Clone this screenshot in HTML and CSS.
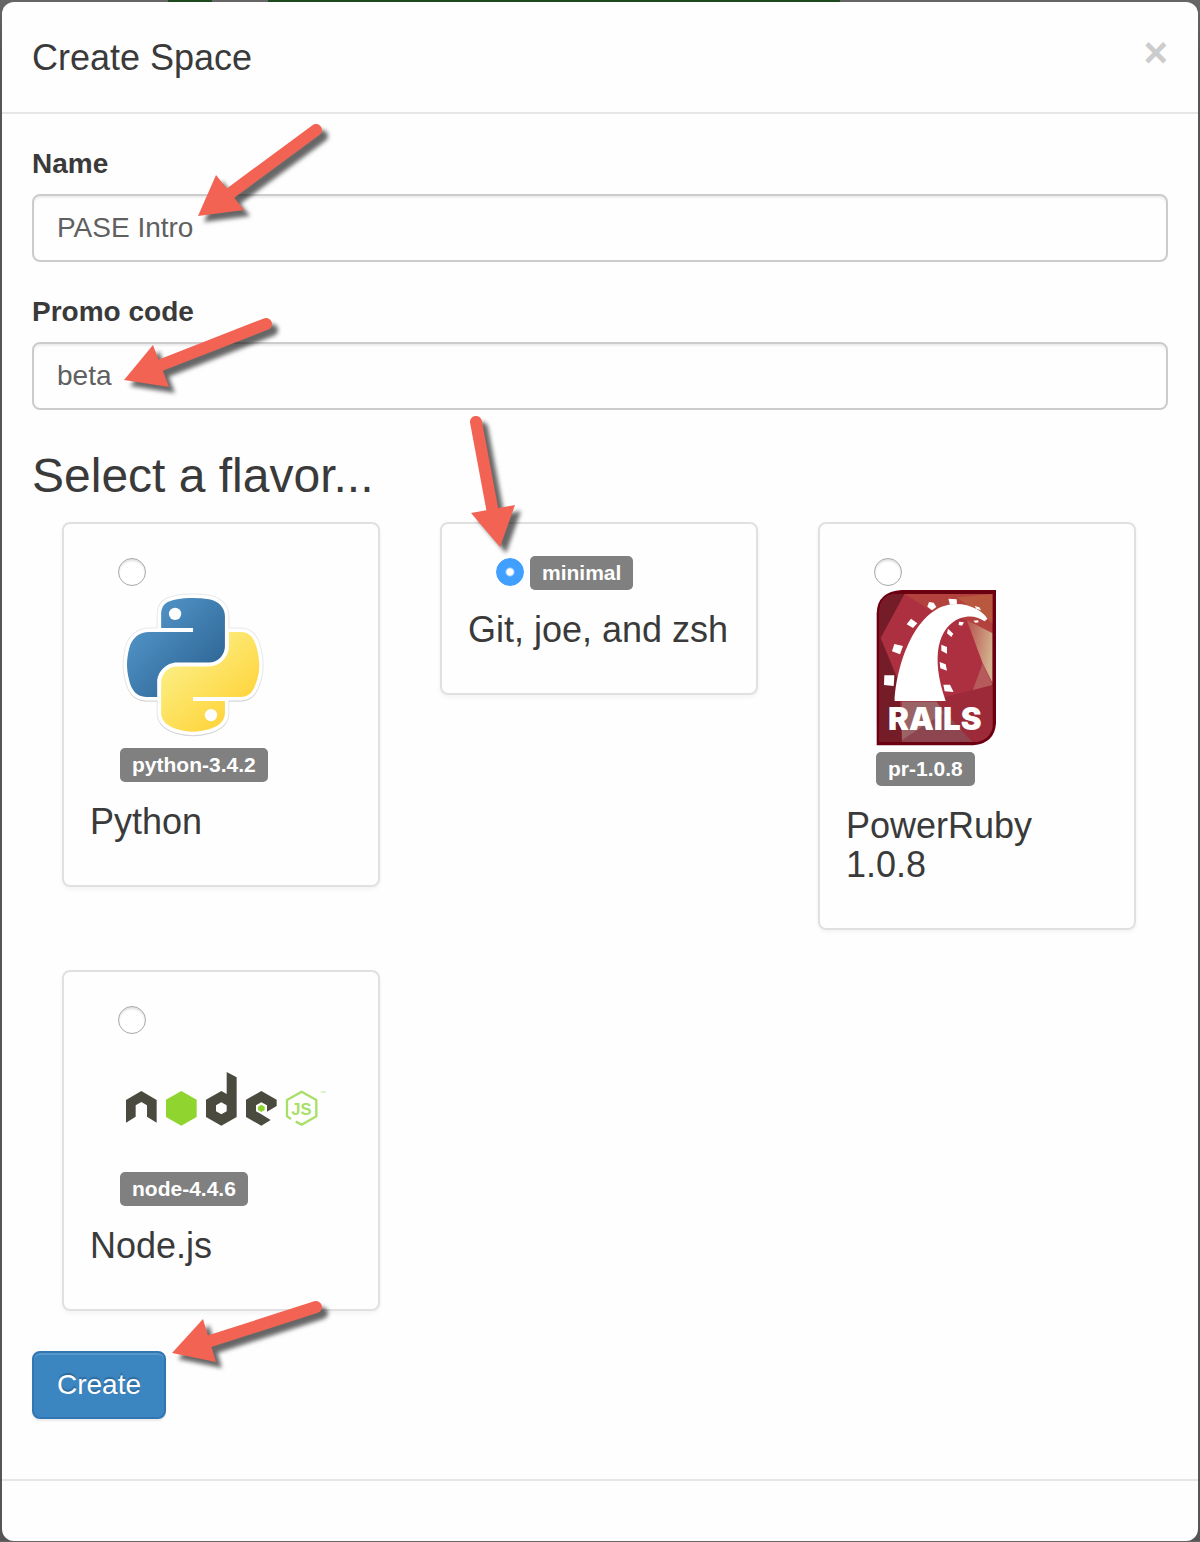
FILE: index.html
```html
<!DOCTYPE html>
<html lang="en">
<head>
<meta charset="utf-8">
<meta name="viewport" content="width=device-width, initial-scale=1">
<title>Create Space</title>
<link rel="stylesheet" href="styles.css">
</head>
<body>
<main class="modal" role="dialog" aria-labelledby="title">
  <header class="modal-header">
    <h1 class="modal-title" id="title">Create Space</h1>
    <button class="close" type="button" aria-label="Close">×</button>
  </header>

  <form class="modal-body">
    <div class="field">
      <label class="field-label" for="name">Name</label>
      <input class="field-input" id="name" type="text" value="PASE Intro">
      <svg class="arrow" viewBox="32 144 300 120" width="300" height="120" aria-hidden="true">
        <path class="arrow-shaft" d="M316 130 L228 195"/>
        <path class="arrow-head" d="M198 216 L216 175 L244 210 Z"/>
      </svg>
    </div>

    <div class="field">
      <label class="field-label" for="promo">Promo code</label>
      <input class="field-input" id="promo" type="text" value="beta">
      <svg class="arrow" viewBox="32 292 300 120" width="300" height="120" aria-hidden="true">
        <path class="arrow-shaft" d="M266 324 L156 367"/>
        <path class="arrow-head" d="M124 380 L153 345 L169 387 Z"/>
      </svg>
    </div>

    <h2 class="section-title">Select a flavor...</h2>

    <div class="flavors">
      <section class="card">
        <div class="choice">
          <div class="choice-row"><input class="radio" type="radio" name="flavor" id="python" value="python"></div>
          <label class="choice-label" for="python">
            <svg class="logo" viewBox="120 590 146 152" width="146" height="152" role="img" aria-label="Python logo">
              <defs>
                <linearGradient id="blue" x1="0" y1="0" x2="0.8" y2="0.8"><stop offset="0" stop-color="#5a9fd4"/><stop offset="1" stop-color="#306998"/></linearGradient>
                <linearGradient id="yellow" x1="0.2" y1="0.2" x2="0.75" y2="0.85"><stop offset="0" stop-color="#fbee82"/><stop offset="1" stop-color="#ffd43b"/></linearGradient>
                <path id="snake-a" d="M54.919 0c-4.584.022-8.961.413-12.813 1.095C30.76 3.099 28.7 7.295 28.7 15.032v10.219h26.813v3.406H18.638c-7.793 0-14.616 4.684-16.75 13.594-2.462 10.213-2.571 16.586 0 27.25 1.906 7.938 6.458 13.594 14.25 13.594h9.219v-12.25c0-8.85 7.657-16.656 16.75-16.656h26.781c7.455 0 13.406-6.138 13.406-13.625V15.032c0-7.266-6.13-12.725-13.406-13.937C64.282.328 59.502-.02 54.919 0z"/>
                <path id="snake-b" d="M85.638 28.657v11.906c0 9.231-7.826 17-16.75 17H42.107c-7.336 0-13.406 6.278-13.406 13.625v25.531c0 7.266 6.319 11.54 13.406 13.625 8.488 2.495 16.627 2.946 26.781 0 6.75-1.954 13.406-5.888 13.406-13.625V86.5H55.513v-3.405h40.188c7.793 0 10.696-5.436 13.406-13.594 2.799-8.399 2.68-16.475 0-27.25-1.926-7.757-5.604-13.594-13.406-13.594H85.638z"/>
              </defs>
              <g transform="translate(127 598) scale(1.19)">
                <g stroke="#e8e8e8" stroke-width="7.6" fill="#e8e8e8"><use href="#snake-a"/><use href="#snake-b"/></g>
                <g stroke="#d2d2d2" stroke-width="5.6" fill="#d2d2d2" transform="translate(0 1)"><use href="#snake-a"/><use href="#snake-b"/></g>
                <g stroke="#fff" stroke-width="6" fill="#fff"><use href="#snake-a"/><use href="#snake-b"/></g>
                <use href="#snake-a" fill="url(#blue)"/><use href="#snake-b" fill="url(#yellow)"/>
                <circle cx="40.4" cy="13.3" r="5.2" fill="#fff"/>
                <circle cx="70.6" cy="98.4" r="5.2" fill="#fff"/>
              </g>
            </svg>
            <span class="badge">python-3.4.2</span>
          </label>
        </div>
        <h3 class="card-title">Python</h3>
      </section>

      <section class="card">
        <div class="choice">
          <div class="choice-row">
            <input class="radio" type="radio" name="flavor" id="minimal" value="minimal" checked>
            <label class="badge" for="minimal">minimal</label>
          </div>
        </div>
        <h3 class="card-title">Git, joe, and zsh</h3>
        <svg class="arrow" viewBox="442 524 120 60" width="120" height="60" aria-hidden="true">
          <path class="arrow-shaft" d="M476 422 L493 513"/>
          <path class="arrow-head" d="M500 547 L471 513 L515 505 Z"/>
        </svg>
      </section>

      <section class="card">
        <div class="choice">
          <div class="choice-row"><input class="radio" type="radio" name="flavor" id="ruby" value="ruby"></div>
          <label class="choice-label" for="ruby">
            <svg class="logo" viewBox="198 240 360 468" width="120" height="156" role="img" aria-label="Rails logo">
              <defs>
                <clipPath id="gem"><path d="M270 252 H548 V650 Q538 694 490 696 H208 V310 Q208 252 262 252 Z"/></clipPath>
                <linearGradient id="shine" x1="0" y1="0" x2="1" y2="0.4"><stop offset="0" stop-color="#b5504a"/><stop offset="1" stop-color="#d3b08e"/></linearGradient>
              </defs>
              <path fill="#6a0010" d="M275 240 H558 V640 Q554 700 490 706 H200 V310 Q202 244 275 240 Z"/>
              <g clip-path="url(#gem)">
                <rect x="198" y="240" width="360" height="468" fill="#ad3040"/>
                <path fill="#741c28" d="M198 240 H290 L212 384 L268 520 L276 708 H198 Z"/>
                <path fill="#b3423f" d="M284 252 H548 V370 L470 330 L360 300 Z"/>
                <path fill="#b9573f" d="M440 262 L548 252 V340 Z"/>
                <path fill="url(#shine)" d="M470 330 L548 370 V520 L518 460 Z"/>
                <path fill="#b65a5c" d="M518 460 L548 525 L485 550 Z"/>
                <path fill="#9d2a38" d="M548 525 L350 575 L490 696 H558 Z"/>
                <path fill="#8d4650" d="M276 575 H380 L486 696 H276 Z"/>
                <path fill="#9a6366" d="M276 575 H380 L400 610 L276 690 Z"/>
              </g>
              <g fill="#fff">
                <path d="M254 573 C258 470 315 283 438 282 C485 282 520 306 532 326 L524 334 C500 318 478 315 450 325 C385 350 360 440 407 573 Z"/>
                <path d="M357 276 L371 278 L379 291 L366 301 L352 290 Z"/>
                <path d="M415 266 L440 268 L441 281 L420 284 Z"/>
                <path d="M303 326 L322 340 L309 354 L290 343 Z"/>
                <path d="M253 402 L279 408 L270 433 L246 424 Z"/>
                <path d="M223 496 H253 L251 528 L222 525 Z"/>
                <path d="M494 288 L508 292 L513 301 L499 296 Z"/>
                <path d="M447 335 L462 337 L456 347 L446 345 Z"/>
                <path d="M490 332 L504 331 L506 337 L496 338 Z"/>
                <path d="M414 356 L430 371 L424 381 L411 370 Z"/>
                <path d="M394 404 L411 411 L411 431 L394 422 Z"/>
                <path d="M389 456 L407 463 L411 482 L391 475 Z"/>
                <path d="M400 524 H420 L431 546 L404 544 Z"/>
                <text class="rails-text" x="234" y="660">RAILS</text>
              </g>
            </svg>
            <span class="badge">pr-1.0.8</span>
          </label>
        </div>
        <h3 class="card-title">PowerRuby<br>1.0.8</h3>
      </section>

      <section class="card">
        <div class="choice">
          <div class="choice-row"><input class="radio" type="radio" name="flavor" id="node" value="node"></div>
          <label class="choice-label" for="node">
            <svg class="logo" viewBox="180 234 630 384" width="210" height="128" role="img" aria-label="Node.js logo">
              <g fill="#4a4b3e" fill-rule="evenodd">
                <path d="M198 420 L244 393 L290 420 V488 L261 470 V436 L244 426 L227 436 V470 L198 488 Z"/>
                <path d="M438 419 L484 393 L500 402 V336 L530 352 V471 L484 497 L438 471 Z M484 427 L468 436 V454 L484 463 L500 454 V436 Z"/>
                <path d="M558 419 L604 393 L650 419 V438 L621 455 V436 L604 427 L588 436 V454 L604 463 L632 480 L604 497 L558 471 Z"/>
              </g>
              <path fill="#8fd42f" d="M364 393 L410 419 V471 L364 497 L318 471 V419 Z"/>
              <path fill="#8fd42f" d="M604 434 L614 440 V450 L604 456 L594 450 V440 Z"/>
              <path fill="none" stroke="#a8df68" stroke-width="7" stroke-linejoin="round" d="M707 485 L725 494 L769 469 V420 L725 395 L681 420 V469 L693 477"/>
              <text class="node-js" x="694" y="464">JS</text>
              <text class="node-tm" x="782" y="406">™</text>
            </svg>
            <span class="badge">node-4.4.6</span>
          </label>
        </div>
        <h3 class="card-title">Node.js</h3>
      </section>
    </div>

    <div class="actions">
      <button class="submit" type="submit">Create</button>
      <svg class="arrow" viewBox="32 1352 300 60" width="300" height="60" aria-hidden="true">
        <path class="arrow-shaft" d="M316 1308 L204 1344"/>
        <path class="arrow-head" d="M172 1354 L203 1320 L216 1363 Z"/>
      </svg>
    </div>
  </form>

  <footer class="modal-footer"></footer>
</main>
</body>
</html>
```
FILE: styles.css
```css
* {
  box-sizing: border-box;
}

body {
  margin: 0;
  padding: 2px 2px 0;
  background: linear-gradient(90deg, transparent 168px, #1f4a20 168px, #1f4a20 212px, transparent 212px, transparent 268px, #1f4a20 268px, #1f4a20 840px, transparent 840px) 0 0 / 100% 2px no-repeat, linear-gradient(#666, #555 60px);
  color: #3a3a3a;
  font-family: "Liberation Sans", Arial, sans-serif;
  font-size: 28px;
  line-height: 40px;
}

h1,
h2,
h3 {
  margin: 0;
  font-weight: 400;
}

.modal {
  background: #fefefe;
  border-radius: 12px;
}

.modal-header {
  display: flex;
  align-items: flex-start;
  justify-content: space-between;
  padding: 30px 30px 28px;
  border-bottom: 2px solid #e6e6e6;
}

.modal-title {
  font-size: 36px;
  line-height: 52px;
}

.close {
  padding: 0;
  border: 0;
  background: none;
  color: #ccc;
  font: bold 42px/42px "Liberation Sans", Arial, sans-serif;
}

.modal-body {
  padding: 30px 30px 60px;
}

.field {
  position: relative;
  margin-bottom: 30px;
}

.field-label {
  display: block;
  margin-bottom: 10px;
  font-weight: 700;
}

.field-input {
  display: block;
  width: 100%;
  height: 68px;
  padding: 12px 23px;
  border: 2px solid #ccc;
  border-radius: 8px;
  background: #fefefe;
  box-shadow: inset 0 2px 2px rgba(0, 0, 0, 0.07);
  color: #606060;
  font: inherit;
}

.section-title {
  margin: 40px 0 20px;
  font-size: 48px;
  line-height: 52px;
}

.flavors {
  display: grid;
  grid-template-columns: repeat(3, minmax(0, 1fr));
  align-items: start;
  gap: 40px 60px;
  padding: 0 32px 0 30px;
}

.card {
  position: relative;
  padding: 26px;
  border: 2px solid #e0e0e0;
  border-radius: 8px;
  box-shadow: 0 2px 4px rgba(0, 0, 0, 0.05);
}

.choice {
  padding-left: 28px;
}

.choice-row {
  display: flex;
  align-items: flex-end;
  gap: 6px;
  height: 40px;
}

.choice-label {
  display: flex;
  flex-direction: column;
  align-items: flex-start;
  gap: 6px;
  padding-left: 2px;
}

.radio {
  flex: none;
  appearance: none;
  width: 28px;
  height: 28px;
  margin: 0 0 4px;
  border: 1px solid #a8a8a8;
  border-radius: 50%;
  background: #fff;
  box-shadow: inset 0 2px 2px rgba(0, 0, 0, 0.12);
}

.radio:checked {
  border-color: #409fff;
  background: radial-gradient(circle, #fff 3px, #409fff 5px);
  box-shadow: none;
}

.logo {
  display: block;
  max-width: 100%;
}

.badge {
  padding: 0 12px;
  border-radius: 5px;
  background: #808080;
  color: #fff;
  font-size: 21px;
  font-weight: 700;
  line-height: 34px;
}

.card-title {
  margin: 20px 0 18px;
  font-size: 36px;
  line-height: 39px;
}

.rails-text {
  font: 900 94px Inter, sans-serif;
}

.node-js {
  fill: #a8df68;
  font: bold 50px "Liberation Sans", Arial, sans-serif;
}

.node-tm {
  fill: #b8e58a;
  font: 16px "Liberation Sans", Arial, sans-serif;
}

.actions {
  position: relative;
  margin-top: 40px;
}

.submit {
  display: block;
  height: 68px;
  padding: 0 23px;
  border: 2px solid #3276b1;
  border-radius: 8px;
  background: #3b85c0;
  box-shadow: inset 0 2px 0 rgba(255, 255, 255, 0.15), 0 2px 2px rgba(0, 0, 0, 0.08);
  color: #fff;
  font: inherit;
  text-shadow: 0 -2px 1px rgba(0, 0, 0, 0.2);
}

/* Callout arrows lie over the form they point at. */
.arrow {
  position: absolute;
  top: 0;
  left: 0;
  z-index: 1;
  overflow: visible;
  pointer-events: none;
  filter: drop-shadow(6px 6px 2px rgba(0, 0, 0, 0.6));
}

.arrow-shaft {
  fill: none;
  stroke: #f26353;
  stroke-width: 12px;
  stroke-linecap: round;
}

.arrow-head {
  fill: #f26353;
}

.modal-footer {
  height: 62px;
  border-top: 2px solid #e6e6e6;
}
```
